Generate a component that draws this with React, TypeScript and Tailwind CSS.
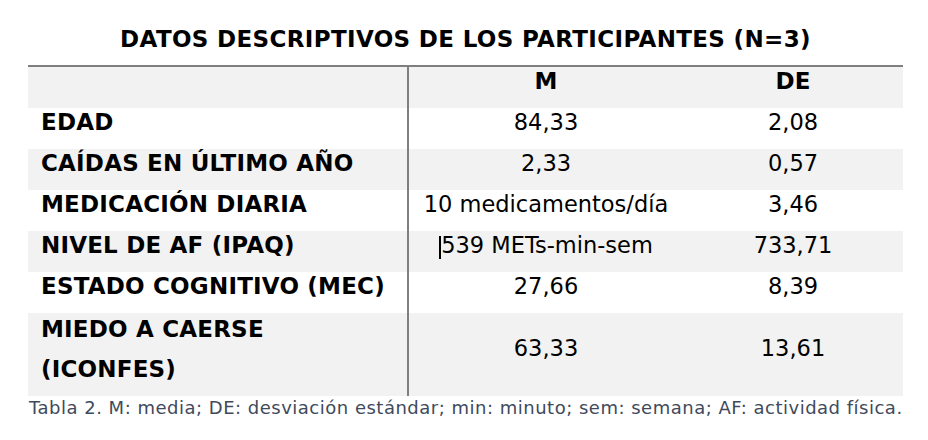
import React from "react";

type Row = { label: React.ReactNode; m: React.ReactNode; de: string; gray: boolean; tall?: boolean };

const rows: Row[] = [
  { label: "EDAD", m: "84,33", de: "2,08", gray: false },
  { label: "CAÍDAS EN ÚLTIMO AÑO", m: "2,33", de: "0,57", gray: true },
  { label: "MEDICACIÓN DIARIA", m: "10 medicamentos/día", de: "3,46", gray: false },
  {
    label: "NIVEL DE AF (IPAQ)",
    m: (
      <>
        <span className="inline-block w-[2px] h-[23px] bg-black align-[-6px]" />
        539 METs-min-sem
      </>
    ),
    de: "733,71",
    gray: true,
  },
  { label: "ESTADO COGNITIVO (MEC)", m: "27,66", de: "8,39", gray: false },
  { label: "", m: "63,33", de: "13,61", gray: true, tall: true },
];

export default function App() {
  return (
    <div
      className="w-[928px] h-[440px] bg-white pl-[28px] pt-[25px] text-black"
      style={{ fontFamily: '"DejaVu Sans", Verdana, sans-serif' }}
    >
      <h1 className="w-[875px] text-center font-bold text-[23px] tracking-[0.35px] leading-[28px] mb-[12px]">
        DATOS DESCRIPTIVOS DE LOS PARTICIPANTES (N=3)
      </h1>
      <div className="w-[875px] border-t-2 border-[#7f7f7f]">
        <div className="grid grid-cols-[379px_276px_1fr] bg-[#f2f2f2] h-[41px] font-bold text-[23px] leading-[29px]">
          <div />
          <div className="border-l-2 border-[#7f7f7f] text-center">M</div>
          <div className="text-center">DE</div>
        </div>
        {rows.map((r, i) => (
          <div
            key={i}
            className={`grid grid-cols-[379px_276px_1fr] text-[22.5px] ${r.tall ? "h-[83px]" : "h-[41px]"} ${
              r.gray ? "bg-[#f2f2f2]" : "bg-white"
            }`}
          >
            {r.tall ? (
              <div className="pl-[13px] font-bold text-[23px] tracking-[0.2px] leading-[40px] -mt-[4px]">
                <div>MIEDO A CAERSE</div>
                <div>(ICONFES)</div>
              </div>
            ) : (
              <div className="pl-[13px] font-bold text-[23px] tracking-[0.2px] leading-[29px] whitespace-nowrap">
                {r.label}
              </div>
            )}
            <div className="border-l-2 border-[#7f7f7f] flex items-center justify-center pb-[12px] leading-[29px] whitespace-nowrap">
              <span>{r.m}</span>
            </div>
            <div className="flex items-center justify-center pb-[12px] leading-[29px]">{r.de}</div>
          </div>
        ))}
      </div>
      <p className="pl-[1px] text-[18px] tracking-[0.5px] leading-[24px] text-[#404a5c] whitespace-nowrap">
        Tabla 2. M: media; DE: desviación estándar; min: minuto; sem: semana; AF: actividad física.
      </p>
    </div>
  );
}
